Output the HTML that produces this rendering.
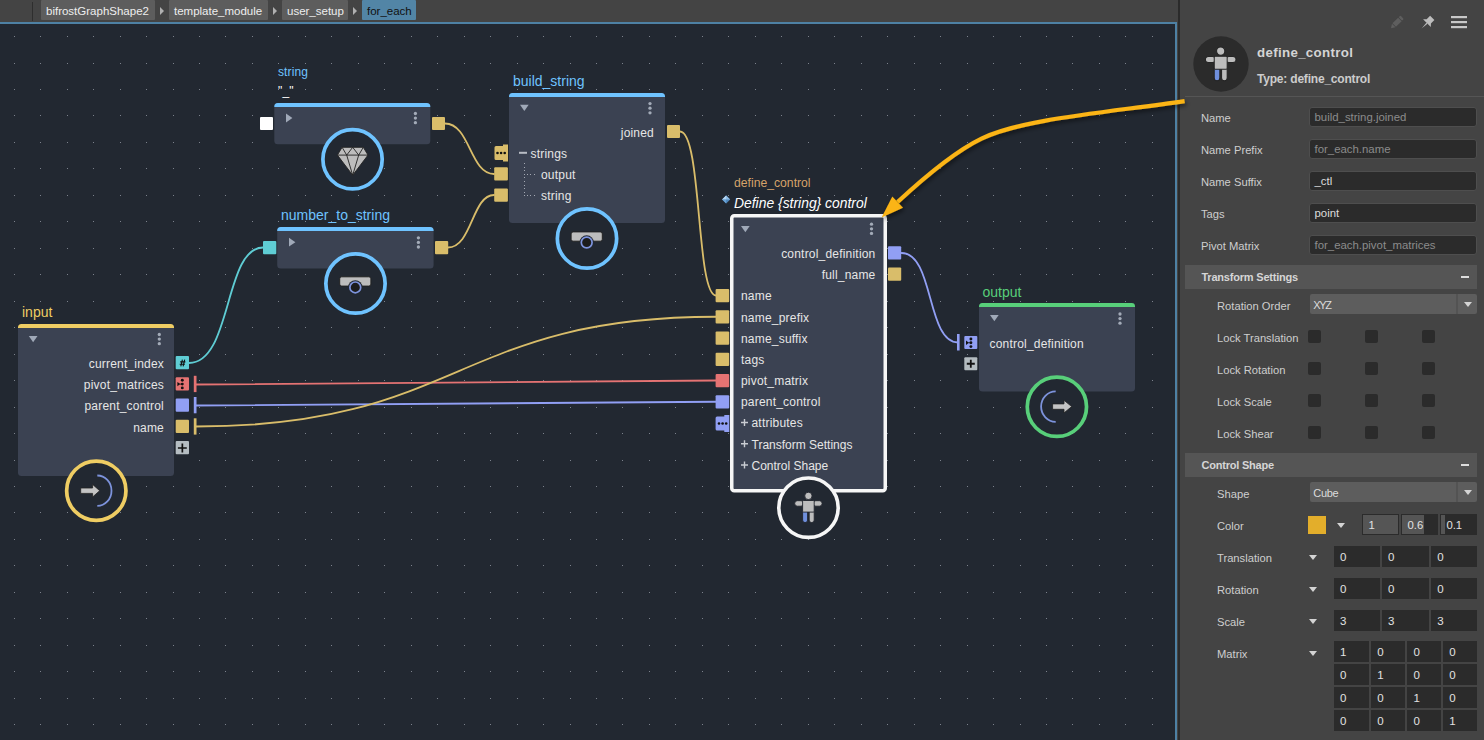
<!DOCTYPE html>
<html><head><meta charset="utf-8"><title>Bifrost Graph</title><style>
*{box-sizing:border-box;margin:0;padding:0}
html,body{width:1484px;height:740px;overflow:hidden;background:#444;font-family:"Liberation Sans",sans-serif;}
#top{position:absolute;left:0;top:0;width:1178px;height:22px;background:#444}
.chip{position:absolute;top:0;height:20px;background:#5d5d5d;color:#eee;font-size:11.5px;line-height:22px;padding-left:5px;white-space:nowrap;border-radius:1px;overflow:hidden}
.chip.act{background:#5285a6;color:#111}
.sep{position:absolute;top:7px;width:0;height:0;border-left:4.6px solid #b0b0b0;border-top:4px solid transparent;border-bottom:4px solid transparent}
#graph{position:absolute;left:0;top:22px;width:1177px;height:718px;background:#222831;border-top:2px solid #4e81a4;border-right:2px solid #4e81a4;overflow:hidden}
#gsvg{position:absolute;left:0;top:-24px}
.t{position:absolute;white-space:nowrap;color:#e6e6e6;font-size:12px;line-height:14px;letter-spacing:0.2px}
.r{text-align:right}
#divider{position:absolute;left:1178px;top:0;width:2px;height:740px;background:#2b2b2b}
#panel{position:absolute;left:1180px;top:0;width:304px;height:740px;background:#444}
.pl{position:absolute;white-space:nowrap;color:#cecece;font-size:11.2px;line-height:14px}
.fld{position:absolute;background:#2b2b2b;border:1px solid #4e4e4e;border-radius:3px;color:#dcdcdc;font-size:11.4px;line-height:18px;padding-left:5px;white-space:nowrap;overflow:hidden}
.fld.dim{color:#8c8c8c}
.hdr{position:absolute;left:5px;width:292.4px;height:24px;background:#555;color:#d6d6d6;font-weight:bold;font-size:11px;letter-spacing:-0.2px;line-height:25.5px;padding-left:16.4px}
.hdr i{position:absolute;right:8px;top:11px;width:8.2px;height:2px;background:#ddd}
.dd{position:absolute;left:130.3px;width:167.1px;height:20px;background:#5d5d5d;border-radius:2px;color:#dcdcdc;font-size:11px;letter-spacing:-0.3px;line-height:22px;padding-left:3px}
.dd:after{content:"";position:absolute;right:19.8px;top:0;width:2px;height:20px;background:#535353}
.dd b{position:absolute;right:5px;top:8px;width:0;height:0;border-top:5.4px solid #d4d4d4;border-left:4.8px solid transparent;border-right:4.8px solid transparent}
.cb{position:absolute;width:13px;height:13px;background:#2b2b2b;border-radius:2px}
.ar{position:absolute;width:0;height:0;border-top:5.4px solid #d4d4d4;border-left:4.8px solid transparent;border-right:4.8px solid transparent}
.nf{position:absolute;background:#2b2b2b;color:#e2e2e2;font-size:11.5px;line-height:23px;padding-left:6px;height:21px;overflow:hidden}
</style></head><body>
<div id="top"><div style="position:absolute;left:32px;top:2px;width:1px;height:19px;background:#2e2e2e"></div><div class="chip " style="left:41px;width:114px">bifrostGraphShape2</div><div class="chip " style="left:169px;width:99px">template_module</div><div class="chip " style="left:282px;width:66px">user_setup</div><div class="chip act" style="left:362px;width:54px">for_each</div><div class="sep" style="left:159.6px"></div><div class="sep" style="left:272.6px"></div><div class="sep" style="left:352.6px"></div></div>
<div id="graph">
<svg id="gsvg" width="1484" height="740" viewBox="0 0 1484 740"><defs><pattern id="dots" x="14" y="36" width="26.5" height="26.5" patternUnits="userSpaceOnUse"><rect x="0" y="0" width="1" height="1" fill="#737983"/></pattern><filter id="sh" x="-10%" y="-10%" width="130%" height="140%"><feDropShadow dx="1.5" dy="2.5" stdDeviation="2" flood-color="#000" flood-opacity="0.5"/></filter></defs><path d="M14 36.5h1M40 36.5h1M67 36.5h1M93 36.5h1M120 36.5h1M146 36.5h1M173 36.5h1M199 36.5h1M225 36.5h1M252 36.5h1M278 36.5h1M305 36.5h1M331 36.5h1M358 36.5h1M384 36.5h1M411 36.5h1M437 36.5h1M464 36.5h1M490 36.5h1M517 36.5h1M543 36.5h1M570 36.5h1M596 36.5h1M622 36.5h1M649 36.5h1M675 36.5h1M702 36.5h1M728 36.5h1M755 36.5h1M781 36.5h1M808 36.5h1M834 36.5h1M861 36.5h1M887 36.5h1M914 36.5h1M940 36.5h1M967 36.5h1M993 36.5h1M1020 36.5h1M1046 36.5h1M1072 36.5h1M1099 36.5h1M1125 36.5h1M1152 36.5h1M14 63.5h1M40 63.5h1M67 63.5h1M93 63.5h1M120 63.5h1M146 63.5h1M173 63.5h1M199 63.5h1M225 63.5h1M252 63.5h1M278 63.5h1M305 63.5h1M331 63.5h1M358 63.5h1M384 63.5h1M411 63.5h1M437 63.5h1M464 63.5h1M490 63.5h1M517 63.5h1M543 63.5h1M570 63.5h1M596 63.5h1M622 63.5h1M649 63.5h1M675 63.5h1M702 63.5h1M728 63.5h1M755 63.5h1M781 63.5h1M808 63.5h1M834 63.5h1M861 63.5h1M887 63.5h1M914 63.5h1M940 63.5h1M967 63.5h1M993 63.5h1M1020 63.5h1M1046 63.5h1M1072 63.5h1M1099 63.5h1M1125 63.5h1M1152 63.5h1M14 89.5h1M40 89.5h1M67 89.5h1M93 89.5h1M120 89.5h1M146 89.5h1M173 89.5h1M199 89.5h1M225 89.5h1M252 89.5h1M278 89.5h1M305 89.5h1M331 89.5h1M358 89.5h1M384 89.5h1M411 89.5h1M437 89.5h1M464 89.5h1M490 89.5h1M517 89.5h1M543 89.5h1M570 89.5h1M596 89.5h1M622 89.5h1M649 89.5h1M675 89.5h1M702 89.5h1M728 89.5h1M755 89.5h1M781 89.5h1M808 89.5h1M834 89.5h1M861 89.5h1M887 89.5h1M914 89.5h1M940 89.5h1M967 89.5h1M993 89.5h1M1020 89.5h1M1046 89.5h1M1072 89.5h1M1099 89.5h1M1125 89.5h1M1152 89.5h1M14 115.5h1M40 115.5h1M67 115.5h1M93 115.5h1M120 115.5h1M146 115.5h1M173 115.5h1M199 115.5h1M225 115.5h1M252 115.5h1M278 115.5h1M305 115.5h1M331 115.5h1M358 115.5h1M384 115.5h1M411 115.5h1M437 115.5h1M464 115.5h1M490 115.5h1M517 115.5h1M543 115.5h1M570 115.5h1M596 115.5h1M622 115.5h1M649 115.5h1M675 115.5h1M702 115.5h1M728 115.5h1M755 115.5h1M781 115.5h1M808 115.5h1M834 115.5h1M861 115.5h1M887 115.5h1M914 115.5h1M940 115.5h1M967 115.5h1M993 115.5h1M1020 115.5h1M1046 115.5h1M1072 115.5h1M1099 115.5h1M1125 115.5h1M1152 115.5h1M14 142.5h1M40 142.5h1M67 142.5h1M93 142.5h1M120 142.5h1M146 142.5h1M173 142.5h1M199 142.5h1M225 142.5h1M252 142.5h1M278 142.5h1M305 142.5h1M331 142.5h1M358 142.5h1M384 142.5h1M411 142.5h1M437 142.5h1M464 142.5h1M490 142.5h1M517 142.5h1M543 142.5h1M570 142.5h1M596 142.5h1M622 142.5h1M649 142.5h1M675 142.5h1M702 142.5h1M728 142.5h1M755 142.5h1M781 142.5h1M808 142.5h1M834 142.5h1M861 142.5h1M887 142.5h1M914 142.5h1M940 142.5h1M967 142.5h1M993 142.5h1M1020 142.5h1M1046 142.5h1M1072 142.5h1M1099 142.5h1M1125 142.5h1M1152 142.5h1M14 168.5h1M40 168.5h1M67 168.5h1M93 168.5h1M120 168.5h1M146 168.5h1M173 168.5h1M199 168.5h1M225 168.5h1M252 168.5h1M278 168.5h1M305 168.5h1M331 168.5h1M358 168.5h1M384 168.5h1M411 168.5h1M437 168.5h1M464 168.5h1M490 168.5h1M517 168.5h1M543 168.5h1M570 168.5h1M596 168.5h1M622 168.5h1M649 168.5h1M675 168.5h1M702 168.5h1M728 168.5h1M755 168.5h1M781 168.5h1M808 168.5h1M834 168.5h1M861 168.5h1M887 168.5h1M914 168.5h1M940 168.5h1M967 168.5h1M993 168.5h1M1020 168.5h1M1046 168.5h1M1072 168.5h1M1099 168.5h1M1125 168.5h1M1152 168.5h1M14 195.5h1M40 195.5h1M67 195.5h1M93 195.5h1M120 195.5h1M146 195.5h1M173 195.5h1M199 195.5h1M225 195.5h1M252 195.5h1M278 195.5h1M305 195.5h1M331 195.5h1M358 195.5h1M384 195.5h1M411 195.5h1M437 195.5h1M464 195.5h1M490 195.5h1M517 195.5h1M543 195.5h1M570 195.5h1M596 195.5h1M622 195.5h1M649 195.5h1M675 195.5h1M702 195.5h1M728 195.5h1M755 195.5h1M781 195.5h1M808 195.5h1M834 195.5h1M861 195.5h1M887 195.5h1M914 195.5h1M940 195.5h1M967 195.5h1M993 195.5h1M1020 195.5h1M1046 195.5h1M1072 195.5h1M1099 195.5h1M1125 195.5h1M1152 195.5h1M14 221.5h1M40 221.5h1M67 221.5h1M93 221.5h1M120 221.5h1M146 221.5h1M173 221.5h1M199 221.5h1M225 221.5h1M252 221.5h1M278 221.5h1M305 221.5h1M331 221.5h1M358 221.5h1M384 221.5h1M411 221.5h1M437 221.5h1M464 221.5h1M490 221.5h1M517 221.5h1M543 221.5h1M570 221.5h1M596 221.5h1M622 221.5h1M649 221.5h1M675 221.5h1M702 221.5h1M728 221.5h1M755 221.5h1M781 221.5h1M808 221.5h1M834 221.5h1M861 221.5h1M887 221.5h1M914 221.5h1M940 221.5h1M967 221.5h1M993 221.5h1M1020 221.5h1M1046 221.5h1M1072 221.5h1M1099 221.5h1M1125 221.5h1M1152 221.5h1M14 248.5h1M40 248.5h1M67 248.5h1M93 248.5h1M120 248.5h1M146 248.5h1M173 248.5h1M199 248.5h1M225 248.5h1M252 248.5h1M278 248.5h1M305 248.5h1M331 248.5h1M358 248.5h1M384 248.5h1M411 248.5h1M437 248.5h1M464 248.5h1M490 248.5h1M517 248.5h1M543 248.5h1M570 248.5h1M596 248.5h1M622 248.5h1M649 248.5h1M675 248.5h1M702 248.5h1M728 248.5h1M755 248.5h1M781 248.5h1M808 248.5h1M834 248.5h1M861 248.5h1M887 248.5h1M914 248.5h1M940 248.5h1M967 248.5h1M993 248.5h1M1020 248.5h1M1046 248.5h1M1072 248.5h1M1099 248.5h1M1125 248.5h1M1152 248.5h1M14 274.5h1M40 274.5h1M67 274.5h1M93 274.5h1M120 274.5h1M146 274.5h1M173 274.5h1M199 274.5h1M225 274.5h1M252 274.5h1M278 274.5h1M305 274.5h1M331 274.5h1M358 274.5h1M384 274.5h1M411 274.5h1M437 274.5h1M464 274.5h1M490 274.5h1M517 274.5h1M543 274.5h1M570 274.5h1M596 274.5h1M622 274.5h1M649 274.5h1M675 274.5h1M702 274.5h1M728 274.5h1M755 274.5h1M781 274.5h1M808 274.5h1M834 274.5h1M861 274.5h1M887 274.5h1M914 274.5h1M940 274.5h1M967 274.5h1M993 274.5h1M1020 274.5h1M1046 274.5h1M1072 274.5h1M1099 274.5h1M1125 274.5h1M1152 274.5h1M14 301.5h1M40 301.5h1M67 301.5h1M93 301.5h1M120 301.5h1M146 301.5h1M173 301.5h1M199 301.5h1M225 301.5h1M252 301.5h1M278 301.5h1M305 301.5h1M331 301.5h1M358 301.5h1M384 301.5h1M411 301.5h1M437 301.5h1M464 301.5h1M490 301.5h1M517 301.5h1M543 301.5h1M570 301.5h1M596 301.5h1M622 301.5h1M649 301.5h1M675 301.5h1M702 301.5h1M728 301.5h1M755 301.5h1M781 301.5h1M808 301.5h1M834 301.5h1M861 301.5h1M887 301.5h1M914 301.5h1M940 301.5h1M967 301.5h1M993 301.5h1M1020 301.5h1M1046 301.5h1M1072 301.5h1M1099 301.5h1M1125 301.5h1M1152 301.5h1M14 327.5h1M40 327.5h1M67 327.5h1M93 327.5h1M120 327.5h1M146 327.5h1M173 327.5h1M199 327.5h1M225 327.5h1M252 327.5h1M278 327.5h1M305 327.5h1M331 327.5h1M358 327.5h1M384 327.5h1M411 327.5h1M437 327.5h1M464 327.5h1M490 327.5h1M517 327.5h1M543 327.5h1M570 327.5h1M596 327.5h1M622 327.5h1M649 327.5h1M675 327.5h1M702 327.5h1M728 327.5h1M755 327.5h1M781 327.5h1M808 327.5h1M834 327.5h1M861 327.5h1M887 327.5h1M914 327.5h1M940 327.5h1M967 327.5h1M993 327.5h1M1020 327.5h1M1046 327.5h1M1072 327.5h1M1099 327.5h1M1125 327.5h1M1152 327.5h1M14 354.5h1M40 354.5h1M67 354.5h1M93 354.5h1M120 354.5h1M146 354.5h1M173 354.5h1M199 354.5h1M225 354.5h1M252 354.5h1M278 354.5h1M305 354.5h1M331 354.5h1M358 354.5h1M384 354.5h1M411 354.5h1M437 354.5h1M464 354.5h1M490 354.5h1M517 354.5h1M543 354.5h1M570 354.5h1M596 354.5h1M622 354.5h1M649 354.5h1M675 354.5h1M702 354.5h1M728 354.5h1M755 354.5h1M781 354.5h1M808 354.5h1M834 354.5h1M861 354.5h1M887 354.5h1M914 354.5h1M940 354.5h1M967 354.5h1M993 354.5h1M1020 354.5h1M1046 354.5h1M1072 354.5h1M1099 354.5h1M1125 354.5h1M1152 354.5h1M14 380.5h1M40 380.5h1M67 380.5h1M93 380.5h1M120 380.5h1M146 380.5h1M173 380.5h1M199 380.5h1M225 380.5h1M252 380.5h1M278 380.5h1M305 380.5h1M331 380.5h1M358 380.5h1M384 380.5h1M411 380.5h1M437 380.5h1M464 380.5h1M490 380.5h1M517 380.5h1M543 380.5h1M570 380.5h1M596 380.5h1M622 380.5h1M649 380.5h1M675 380.5h1M702 380.5h1M728 380.5h1M755 380.5h1M781 380.5h1M808 380.5h1M834 380.5h1M861 380.5h1M887 380.5h1M914 380.5h1M940 380.5h1M967 380.5h1M993 380.5h1M1020 380.5h1M1046 380.5h1M1072 380.5h1M1099 380.5h1M1125 380.5h1M1152 380.5h1M14 407.5h1M40 407.5h1M67 407.5h1M93 407.5h1M120 407.5h1M146 407.5h1M173 407.5h1M199 407.5h1M225 407.5h1M252 407.5h1M278 407.5h1M305 407.5h1M331 407.5h1M358 407.5h1M384 407.5h1M411 407.5h1M437 407.5h1M464 407.5h1M490 407.5h1M517 407.5h1M543 407.5h1M570 407.5h1M596 407.5h1M622 407.5h1M649 407.5h1M675 407.5h1M702 407.5h1M728 407.5h1M755 407.5h1M781 407.5h1M808 407.5h1M834 407.5h1M861 407.5h1M887 407.5h1M914 407.5h1M940 407.5h1M967 407.5h1M993 407.5h1M1020 407.5h1M1046 407.5h1M1072 407.5h1M1099 407.5h1M1125 407.5h1M1152 407.5h1M14 433.5h1M40 433.5h1M67 433.5h1M93 433.5h1M120 433.5h1M146 433.5h1M173 433.5h1M199 433.5h1M225 433.5h1M252 433.5h1M278 433.5h1M305 433.5h1M331 433.5h1M358 433.5h1M384 433.5h1M411 433.5h1M437 433.5h1M464 433.5h1M490 433.5h1M517 433.5h1M543 433.5h1M570 433.5h1M596 433.5h1M622 433.5h1M649 433.5h1M675 433.5h1M702 433.5h1M728 433.5h1M755 433.5h1M781 433.5h1M808 433.5h1M834 433.5h1M861 433.5h1M887 433.5h1M914 433.5h1M940 433.5h1M967 433.5h1M993 433.5h1M1020 433.5h1M1046 433.5h1M1072 433.5h1M1099 433.5h1M1125 433.5h1M1152 433.5h1M14 460.5h1M40 460.5h1M67 460.5h1M93 460.5h1M120 460.5h1M146 460.5h1M173 460.5h1M199 460.5h1M225 460.5h1M252 460.5h1M278 460.5h1M305 460.5h1M331 460.5h1M358 460.5h1M384 460.5h1M411 460.5h1M437 460.5h1M464 460.5h1M490 460.5h1M517 460.5h1M543 460.5h1M570 460.5h1M596 460.5h1M622 460.5h1M649 460.5h1M675 460.5h1M702 460.5h1M728 460.5h1M755 460.5h1M781 460.5h1M808 460.5h1M834 460.5h1M861 460.5h1M887 460.5h1M914 460.5h1M940 460.5h1M967 460.5h1M993 460.5h1M1020 460.5h1M1046 460.5h1M1072 460.5h1M1099 460.5h1M1125 460.5h1M1152 460.5h1M14 486.5h1M40 486.5h1M67 486.5h1M93 486.5h1M120 486.5h1M146 486.5h1M173 486.5h1M199 486.5h1M225 486.5h1M252 486.5h1M278 486.5h1M305 486.5h1M331 486.5h1M358 486.5h1M384 486.5h1M411 486.5h1M437 486.5h1M464 486.5h1M490 486.5h1M517 486.5h1M543 486.5h1M570 486.5h1M596 486.5h1M622 486.5h1M649 486.5h1M675 486.5h1M702 486.5h1M728 486.5h1M755 486.5h1M781 486.5h1M808 486.5h1M834 486.5h1M861 486.5h1M887 486.5h1M914 486.5h1M940 486.5h1M967 486.5h1M993 486.5h1M1020 486.5h1M1046 486.5h1M1072 486.5h1M1099 486.5h1M1125 486.5h1M1152 486.5h1M14 512.5h1M40 512.5h1M67 512.5h1M93 512.5h1M120 512.5h1M146 512.5h1M173 512.5h1M199 512.5h1M225 512.5h1M252 512.5h1M278 512.5h1M305 512.5h1M331 512.5h1M358 512.5h1M384 512.5h1M411 512.5h1M437 512.5h1M464 512.5h1M490 512.5h1M517 512.5h1M543 512.5h1M570 512.5h1M596 512.5h1M622 512.5h1M649 512.5h1M675 512.5h1M702 512.5h1M728 512.5h1M755 512.5h1M781 512.5h1M808 512.5h1M834 512.5h1M861 512.5h1M887 512.5h1M914 512.5h1M940 512.5h1M967 512.5h1M993 512.5h1M1020 512.5h1M1046 512.5h1M1072 512.5h1M1099 512.5h1M1125 512.5h1M1152 512.5h1M14 539.5h1M40 539.5h1M67 539.5h1M93 539.5h1M120 539.5h1M146 539.5h1M173 539.5h1M199 539.5h1M225 539.5h1M252 539.5h1M278 539.5h1M305 539.5h1M331 539.5h1M358 539.5h1M384 539.5h1M411 539.5h1M437 539.5h1M464 539.5h1M490 539.5h1M517 539.5h1M543 539.5h1M570 539.5h1M596 539.5h1M622 539.5h1M649 539.5h1M675 539.5h1M702 539.5h1M728 539.5h1M755 539.5h1M781 539.5h1M808 539.5h1M834 539.5h1M861 539.5h1M887 539.5h1M914 539.5h1M940 539.5h1M967 539.5h1M993 539.5h1M1020 539.5h1M1046 539.5h1M1072 539.5h1M1099 539.5h1M1125 539.5h1M1152 539.5h1M14 565.5h1M40 565.5h1M67 565.5h1M93 565.5h1M120 565.5h1M146 565.5h1M173 565.5h1M199 565.5h1M225 565.5h1M252 565.5h1M278 565.5h1M305 565.5h1M331 565.5h1M358 565.5h1M384 565.5h1M411 565.5h1M437 565.5h1M464 565.5h1M490 565.5h1M517 565.5h1M543 565.5h1M570 565.5h1M596 565.5h1M622 565.5h1M649 565.5h1M675 565.5h1M702 565.5h1M728 565.5h1M755 565.5h1M781 565.5h1M808 565.5h1M834 565.5h1M861 565.5h1M887 565.5h1M914 565.5h1M940 565.5h1M967 565.5h1M993 565.5h1M1020 565.5h1M1046 565.5h1M1072 565.5h1M1099 565.5h1M1125 565.5h1M1152 565.5h1M14 592.5h1M40 592.5h1M67 592.5h1M93 592.5h1M120 592.5h1M146 592.5h1M173 592.5h1M199 592.5h1M225 592.5h1M252 592.5h1M278 592.5h1M305 592.5h1M331 592.5h1M358 592.5h1M384 592.5h1M411 592.5h1M437 592.5h1M464 592.5h1M490 592.5h1M517 592.5h1M543 592.5h1M570 592.5h1M596 592.5h1M622 592.5h1M649 592.5h1M675 592.5h1M702 592.5h1M728 592.5h1M755 592.5h1M781 592.5h1M808 592.5h1M834 592.5h1M861 592.5h1M887 592.5h1M914 592.5h1M940 592.5h1M967 592.5h1M993 592.5h1M1020 592.5h1M1046 592.5h1M1072 592.5h1M1099 592.5h1M1125 592.5h1M1152 592.5h1M14 618.5h1M40 618.5h1M67 618.5h1M93 618.5h1M120 618.5h1M146 618.5h1M173 618.5h1M199 618.5h1M225 618.5h1M252 618.5h1M278 618.5h1M305 618.5h1M331 618.5h1M358 618.5h1M384 618.5h1M411 618.5h1M437 618.5h1M464 618.5h1M490 618.5h1M517 618.5h1M543 618.5h1M570 618.5h1M596 618.5h1M622 618.5h1M649 618.5h1M675 618.5h1M702 618.5h1M728 618.5h1M755 618.5h1M781 618.5h1M808 618.5h1M834 618.5h1M861 618.5h1M887 618.5h1M914 618.5h1M940 618.5h1M967 618.5h1M993 618.5h1M1020 618.5h1M1046 618.5h1M1072 618.5h1M1099 618.5h1M1125 618.5h1M1152 618.5h1M14 645.5h1M40 645.5h1M67 645.5h1M93 645.5h1M120 645.5h1M146 645.5h1M173 645.5h1M199 645.5h1M225 645.5h1M252 645.5h1M278 645.5h1M305 645.5h1M331 645.5h1M358 645.5h1M384 645.5h1M411 645.5h1M437 645.5h1M464 645.5h1M490 645.5h1M517 645.5h1M543 645.5h1M570 645.5h1M596 645.5h1M622 645.5h1M649 645.5h1M675 645.5h1M702 645.5h1M728 645.5h1M755 645.5h1M781 645.5h1M808 645.5h1M834 645.5h1M861 645.5h1M887 645.5h1M914 645.5h1M940 645.5h1M967 645.5h1M993 645.5h1M1020 645.5h1M1046 645.5h1M1072 645.5h1M1099 645.5h1M1125 645.5h1M1152 645.5h1M14 671.5h1M40 671.5h1M67 671.5h1M93 671.5h1M120 671.5h1M146 671.5h1M173 671.5h1M199 671.5h1M225 671.5h1M252 671.5h1M278 671.5h1M305 671.5h1M331 671.5h1M358 671.5h1M384 671.5h1M411 671.5h1M437 671.5h1M464 671.5h1M490 671.5h1M517 671.5h1M543 671.5h1M570 671.5h1M596 671.5h1M622 671.5h1M649 671.5h1M675 671.5h1M702 671.5h1M728 671.5h1M755 671.5h1M781 671.5h1M808 671.5h1M834 671.5h1M861 671.5h1M887 671.5h1M914 671.5h1M940 671.5h1M967 671.5h1M993 671.5h1M1020 671.5h1M1046 671.5h1M1072 671.5h1M1099 671.5h1M1125 671.5h1M1152 671.5h1M14 698.5h1M40 698.5h1M67 698.5h1M93 698.5h1M120 698.5h1M146 698.5h1M173 698.5h1M199 698.5h1M225 698.5h1M252 698.5h1M278 698.5h1M305 698.5h1M331 698.5h1M358 698.5h1M384 698.5h1M411 698.5h1M437 698.5h1M464 698.5h1M490 698.5h1M517 698.5h1M543 698.5h1M570 698.5h1M596 698.5h1M622 698.5h1M649 698.5h1M675 698.5h1M702 698.5h1M728 698.5h1M755 698.5h1M781 698.5h1M808 698.5h1M834 698.5h1M861 698.5h1M887 698.5h1M914 698.5h1M940 698.5h1M967 698.5h1M993 698.5h1M1020 698.5h1M1046 698.5h1M1072 698.5h1M1099 698.5h1M1125 698.5h1M1152 698.5h1M14 724.5h1M40 724.5h1M67 724.5h1M93 724.5h1M120 724.5h1M146 724.5h1M173 724.5h1M199 724.5h1M225 724.5h1M252 724.5h1M278 724.5h1M305 724.5h1M331 724.5h1M358 724.5h1M384 724.5h1M411 724.5h1M437 724.5h1M464 724.5h1M490 724.5h1M517 724.5h1M543 724.5h1M570 724.5h1M596 724.5h1M622 724.5h1M649 724.5h1M675 724.5h1M702 724.5h1M728 724.5h1M755 724.5h1M781 724.5h1M808 724.5h1M834 724.5h1M861 724.5h1M887 724.5h1M914 724.5h1M940 724.5h1M967 724.5h1M993 724.5h1M1020 724.5h1M1046 724.5h1M1072 724.5h1M1099 724.5h1M1125 724.5h1M1152 724.5h1" stroke="#7c828c" stroke-width="1" fill="none" shape-rendering="crispEdges"/><path d="M445 123.5 C470 123.5 470 174 494 174" fill="none" stroke="#d9bd6a" stroke-width="1.8" stroke-linecap="round"/><path d="M448 247.5 C472 247.5 472 195 494 195" fill="none" stroke="#d9bd6a" stroke-width="1.8" stroke-linecap="round"/><path d="M680 131.5 C702 131.5 696 295.5 716 295.5" fill="none" stroke="#d9bd6a" stroke-width="1.8" stroke-linecap="round"/><path d="M189 363 C232 363 224 247.5 263 247.5" fill="none" stroke="#5fcdd4" stroke-width="1.8" stroke-linecap="round"/><path d="M196 384.5 L716 380.5" fill="none" stroke="#e57373" stroke-width="1.8" stroke-linecap="round"/><path d="M196 405.5 L716 401.75" fill="none" stroke="#919ff4" stroke-width="1.8" stroke-linecap="round"/><path d="M196 426.5 C460 426.5 456 316.75 716 316.75" fill="none" stroke="#d9bd6a" stroke-width="1.8" stroke-linecap="round"/><path d="M901.5 253 C934 253 926.5 342.5 958 342.5" fill="none" stroke="#919ff4" stroke-width="1.8" stroke-linecap="round"/><rect x="274.3" y="103" width="156" height="41.3" rx="3.5" fill="#3b4252"/><path d="M274.3 107 v-0.5 a3.5 3.5 0 0 1 3.5 -3.5 h149 a3.5 3.5 0 0 1 3.5 3.5 v0.5z" fill="#6fc3ff"/><rect x="260" y="117" width="13" height="13" rx="1" fill="#fff"/><rect x="432" y="117" width="13" height="13" rx="1" fill="#d9bd6a"/><path d="M286 113.6 v8.8 l6.4 -4.4z" fill="#a0a9b8"/><circle cx="415.4" cy="113.5" r="1.65" fill="#a3abb8"/><circle cx="415.4" cy="118.1" r="1.65" fill="#a3abb8"/><circle cx="415.4" cy="122.7" r="1.65" fill="#a3abb8"/><circle cx="352.55" cy="159.3" r="29.65" fill="#222831" stroke="#6fc3ff" stroke-width="3.7"/><g transform="translate(352.7,161)" stroke="#222" stroke-width="0.9" stroke-linejoin="round" fill="#bdbdbd"><path d="M-15.3 -5.9 L-10.6 -13.7 H10.6 L15.3 -5.9 L0 14.2z"/><path d="M-15.3 -5.9 H15.3 M-6 -5.9 L0 14.2 L6 -5.9 M-10.6 -13.7 L-6 -5.9 L0 -13.7 L6 -5.9 L10.6 -13.7" fill="none"/></g><rect x="277.2" y="227" width="156.4" height="41.6" rx="3.5" fill="#3b4252"/><path d="M277.2 231 v-0.5 a3.5 3.5 0 0 1 3.5 -3.5 h149.4 a3.5 3.5 0 0 1 3.5 3.5 v0.5z" fill="#6fc3ff"/><rect x="263" y="241" width="13.3" height="13.3" rx="1" fill="#5fcdd4"/><rect x="435" y="241" width="13.2" height="13.3" rx="1" fill="#d9bd6a"/><path d="M289 237.8 v8.8 l6.4 -4.4z" fill="#a0a9b8"/><circle cx="418.4" cy="237.8" r="1.65" fill="#a3abb8"/><circle cx="418.4" cy="242.4" r="1.65" fill="#a3abb8"/><circle cx="418.4" cy="247.0" r="1.65" fill="#a3abb8"/><circle cx="355.5" cy="283.55" r="29.65" fill="#222831" stroke="#6fc3ff" stroke-width="3.7"/><g transform="translate(355.3,286.3)"><rect x="-15.6" y="-9.5" width="31.2" height="9.3" rx="2" fill="#bdbdbd" stroke="#222" stroke-width="1"/><circle cx="0" cy="1.1" r="7.2" fill="#222831"/><circle cx="0" cy="1.1" r="5.4" fill="#1c1c1c" stroke="#7d93dc" stroke-width="1.7"/></g><rect x="509" y="93" width="156" height="130" rx="3.5" fill="#3b4252"/><path d="M509 97 v-0.5 a3.5 3.5 0 0 1 3.5 -3.5 h149 a3.5 3.5 0 0 1 3.5 3.5 v0.5z" fill="#6fc3ff"/><rect x="667" y="125" width="13" height="13" rx="1" fill="#d9bd6a"/><path d="M520 104.8 h8.7 l-4.35 6.2z" fill="#a0a9b8"/><circle cx="650" cy="103.6" r="1.65" fill="#a3abb8"/><circle cx="650" cy="108.19999999999999" r="1.65" fill="#a3abb8"/><circle cx="650" cy="112.8" r="1.65" fill="#a3abb8"/><path d="M494.5 147.5 a1.5 1.5 0 0 1 1.5 -1.5 h7 v-1.5 h5 v17 h-5 v-1.5 h-7 a1.5 1.5 0 0 1 -1.5 -1.5z" fill="#d9bd6a"/><circle cx="497.5" cy="153" r="1.3" fill="#111"/><circle cx="501.1" cy="153" r="1.3" fill="#111"/><circle cx="504.7" cy="153" r="1.3" fill="#111"/><rect x="494.2" y="167.3" width="13.7" height="13.3" rx="1" fill="#d9bd6a"/><rect x="494.2" y="188.5" width="13.7" height="13.3" rx="1" fill="#d9bd6a"/><rect x="519" y="151.8" width="8" height="2" fill="#b8bcc4"/><path d="M524 163.5h1M524 167.5h1M524 170.5h1M524 174.5h1M524 177.5h1M524 181.5h1M524 185.5h1M524 188.5h1M524 192.5h1M524 195.5h1M527 174.5h1M530 174.5h1M534 174.5h1M527 195.5h1M530 195.5h1M534 195.5h1" stroke="#a4a9b3" stroke-width="1" fill="none" shape-rendering="crispEdges"/><circle cx="587" cy="238.5" r="29.65" fill="#222831" stroke="#6fc3ff" stroke-width="3.7"/><g transform="translate(586.7,241.4)"><rect x="-15.6" y="-9.5" width="31.2" height="9.3" rx="2" fill="#bdbdbd" stroke="#222" stroke-width="1"/><circle cx="0" cy="1.1" r="7.2" fill="#222831"/><circle cx="0" cy="1.1" r="5.4" fill="#1c1c1c" stroke="#7d93dc" stroke-width="1.7"/></g><rect x="18" y="324" width="156" height="152" rx="3.5" fill="#3b4252"/><path d="M18 328 v-0.5 a3.5 3.5 0 0 1 3.5 -3.5 h149 a3.5 3.5 0 0 1 3.5 3.5 v0.5z" fill="#efcd63"/><path d="M28.8 336 h8.7 l-4.35 6.2z" fill="#a0a9b8"/><circle cx="159.3" cy="334.5" r="1.65" fill="#a3abb8"/><circle cx="159.3" cy="339.1" r="1.65" fill="#a3abb8"/><circle cx="159.3" cy="343.7" r="1.65" fill="#a3abb8"/><rect x="175.7" y="356" width="13.3" height="13.3" rx="1" fill="#5fcdd4"/><rect x="175.7" y="377.3" width="13.3" height="13.3" rx="1" fill="#e57373"/><rect x="175.7" y="398.5" width="13.3" height="13.3" rx="1" fill="#919ff4"/><rect x="175.7" y="419.8" width="13.3" height="13.3" rx="1" fill="#d9bd6a"/><rect x="175.7" y="441" width="13.3" height="13.3" rx="1" fill="#b5bdc2"/><path d="M182.4 359.7 l-1.6 6.7 M184.7 359.7 l-1.6 6.7 M180.2 361.9 h5.2 M179.7 364.3 h5.2" stroke="#111" stroke-width="1.1" fill="none"/><g fill="#111"><circle cx="182.29999999999998" cy="380.3" r="1.45"/><circle cx="182.29999999999998" cy="384.1" r="1.45"/><circle cx="182.29999999999998" cy="387.90000000000003" r="1.45"/><path d="M177.39999999999998 381.90000000000003 l2.9 2.2 l-2.9 2.2z"/><rect x="179.7" y="383.7" width="1.6" height="0.8"/></g><path d="M177.9 448 h8.9 M182.35 443.6 v8.8" stroke="#111" stroke-width="1.7"/><rect x="193.8" y="375.8" width="2.7" height="16.3" fill="#e57373"/><rect x="193.8" y="397" width="2.7" height="16.3" fill="#919ff4"/><rect x="193.8" y="418.3" width="2.7" height="16.3" fill="#d9bd6a"/><circle cx="96.3" cy="490.7" r="29.65" fill="#222831" stroke="#efcd63" stroke-width="3.7"/><g transform="translate(96.3,490.7)"><path d="M1 -15.2 A14.2 15.2 0 0 1 1 15.2" fill="none" stroke="#7d93dc" stroke-width="1.8"/><path d="M-15.6 -2.7 h11.9 v-3.6 l7.1 6.3 l-7.1 6.3 v-3.6 h-11.9z" fill="#c4c4c4" stroke="#222" stroke-width="0.8"/></g><rect x="731.75" y="215.75" width="153.5" height="275" rx="2.5" fill="#3b4252" stroke="#f6f6f6" stroke-width="3.5"/><path d="M741 226 h8.7 l-4.35 6.2z" fill="#a0a9b8"/><circle cx="871.5" cy="224.2" r="1.65" fill="#a3abb8"/><circle cx="871.5" cy="228.79999999999998" r="1.65" fill="#a3abb8"/><circle cx="871.5" cy="233.39999999999998" r="1.65" fill="#a3abb8"/><rect x="888" y="246.3" width="13.2" height="13.3" rx="1" fill="#919ff4"/><rect x="888" y="267.4" width="13.2" height="13.3" rx="1" fill="#d9bd6a"/><rect x="715.6" y="289" width="13.6" height="13.3" rx="1" fill="#d9bd6a"/><rect x="715.6" y="310.25" width="13.6" height="13.3" rx="1" fill="#d9bd6a"/><rect x="715.6" y="331.5" width="13.6" height="13.3" rx="1" fill="#d9bd6a"/><rect x="715.6" y="352.75" width="13.6" height="13.3" rx="1" fill="#d9bd6a"/><rect x="715.6" y="374" width="13.6" height="13.3" rx="1" fill="#e57373"/><rect x="715.6" y="395.25" width="13.6" height="13.3" rx="1" fill="#919ff4"/><path d="M715.6 418 a1.5 1.5 0 0 1 1.5 -1.5 h7.2 v-1.5 h5 v17 h-5 v-1.5 h-7.2 a1.5 1.5 0 0 1 -1.5 -1.5z" fill="#919ff4"/><circle cx="719.0" cy="423.5" r="1.3" fill="#111"/><circle cx="722.6" cy="423.5" r="1.3" fill="#111"/><circle cx="726.2" cy="423.5" r="1.3" fill="#111"/><path d="M741 422.5 h7 M744.5 419.0 v7" stroke="#c9ccd2" stroke-width="1.4"/><path d="M741 443.75 h7 M744.5 440.25 v7" stroke="#c9ccd2" stroke-width="1.4"/><path d="M741 465 h7 M744.5 461.5 v7" stroke="#c9ccd2" stroke-width="1.4"/><path d="M726.15 195.6 l4.05 3.95 l-4.05 3.95 l-4.05 -3.95z" fill="#4f87bd"/><path d="M726.15 195.6 l4.05 3.95 h-8.1z" fill="#8fbde6"/><path d="M726.15 195.6 v3.95 h-4.05z" fill="#b7d7f2"/><path d="M726.15 203.5 v-3.95 h-4.05z" fill="#6ba3d6"/><circle cx="808.5" cy="507.7" r="29.7" fill="#222831" stroke="#f6f6f6" stroke-width="3.6"/><g transform="translate(808.4,507.4) scale(1.0)" stroke="#20242c" stroke-width="0.9"><circle cx="0" cy="-11.5" r="3.7" fill="#bdbdbd"/><rect x="-13.7" y="-6.7" width="9" height="5.5" rx="2.7" fill="#bdbdbd"/><rect x="4.7" y="-6.7" width="9" height="5.5" rx="2.7" fill="#bdbdbd"/><path d="M-5.8 4 h5 v8.7 a2.5 2.5 0 0 1 -5 0z" fill="#6f8fdc"/><path d="M0.8 4 h5 v8.7 a2.5 2.5 0 0 1 -5 0z" fill="#bdbdbd"/><rect x="-5.8" y="-6.9" width="11.6" height="11.6" rx="0.8" fill="#bdbdbd"/></g><rect x="979" y="303" width="156" height="88.6" rx="3.5" fill="#3b4252"/><path d="M979 307 v-0.5 a3.5 3.5 0 0 1 3.5 -3.5 h149 a3.5 3.5 0 0 1 3.5 3.5 v0.5z" fill="#58cf7a"/><path d="M990 315 h8.7 l-4.35 6.2z" fill="#a0a9b8"/><circle cx="1120" cy="314.0" r="1.65" fill="#a3abb8"/><circle cx="1120" cy="318.6" r="1.65" fill="#a3abb8"/><circle cx="1120" cy="323.2" r="1.65" fill="#a3abb8"/><rect x="964.3" y="336" width="13" height="13" rx="1" fill="#919ff4"/><g fill="#111"><circle cx="970.9" cy="339" r="1.45"/><circle cx="970.9" cy="342.8" r="1.45"/><circle cx="970.9" cy="346.6" r="1.45"/><path d="M966.0 340.6 l2.9 2.2 l-2.9 2.2z"/><rect x="968.3" y="342.4" width="1.6" height="0.8"/></g><rect x="964.3" y="357.25" width="13" height="13" rx="1" fill="#b4bcc0"/><path d="M966.8 363.75 h8 M970.8 359.75 v8" stroke="#111" stroke-width="1.8"/><rect x="957" y="334" width="2.6" height="16.5" fill="#919ff4"/><circle cx="1056.9" cy="406.8" r="29.65" fill="#222831" stroke="#58cf7a" stroke-width="3.7"/><g transform="translate(1056.9,406.6)"><path d="M-1.2 -15.2 A14.6 15.2 0 0 0 -1.2 15.2" fill="none" stroke="#7d93dc" stroke-width="1.8"/><path d="M-4.3 -2.7 h11.4 v-3.6 l7.7 6.3 l-7.7 6.3 v-3.6 h-11.4z" fill="#c4c4c4" stroke="#222" stroke-width="0.8"/></g></svg>
<div class="t " style="left:278px;top:41px;color:#6fc3ff;font-size:12px;letter-spacing:0.1px">string</div><div class="t " style="left:278px;top:60px;color:#fff;font-size:12px">&quot;_&quot;</div><div class="t " style="left:281px;top:183px;color:#6fc3ff;font-size:14px;line-height:16px;letter-spacing:0;">number_to_string</div><div class="t " style="left:513px;top:49px;color:#6fc3ff;font-size:14px;line-height:16px;letter-spacing:0;">build_string</div><div class="t r" style="right:521px;top:102px;">joined</div><div class="t " style="left:530.5px;top:123px;">strings</div><div class="t " style="left:541px;top:144px;">output</div><div class="t " style="left:541px;top:165px;">string</div><div class="t " style="left:22px;top:280px;color:#efcd63;font-size:14px;line-height:16px;letter-spacing:0;">input</div><div class="t r" style="right:1011px;top:333px;">current_index</div><div class="t r" style="right:1011px;top:354px;">pivot_matrices</div><div class="t r" style="right:1011px;top:375px;">parent_control</div><div class="t r" style="right:1011px;top:397px;">name</div><div class="t " style="left:734px;top:152px;color:#d6a36a;font-size:12.2px;letter-spacing:0">define_control</div><div class="t " style="left:734px;top:171px;color:#fff;font-size:13.9px;font-style:italic;line-height:16px;letter-spacing:0">Define {string} control</div><div class="t r" style="right:299.5px;top:223px;">control_definition</div><div class="t r" style="right:299.5px;top:244px;">full_name</div><div class="t " style="left:741px;top:265px;">name</div><div class="t " style="left:741px;top:287px;">name_prefix</div><div class="t " style="left:741px;top:308px;">name_suffix</div><div class="t " style="left:741px;top:329px;">tags</div><div class="t " style="left:741px;top:350px;">pivot_matrix</div><div class="t " style="left:741px;top:371px;">parent_control</div><div class="t " style="left:751.5px;top:392px;letter-spacing:0.2px">attributes</div><div class="t " style="left:751.5px;top:414px;letter-spacing:0">Transform Settings</div><div class="t " style="left:751.5px;top:435px;letter-spacing:0">Control Shape</div><div class="t " style="left:982.5px;top:260px;color:#58cf7a;font-size:14px;line-height:16px;letter-spacing:0;">output</div><div class="t " style="left:989.5px;top:313px;">control_definition</div>
</div>
<div id="divider"></div>
<div id="panel"><svg width="304" height="100" style="position:absolute;left:0;top:0"><circle cx="41" cy="64" r="27.7" fill="#2b2b2b"/><g transform="translate(40.7,63.9) scale(1.115)" stroke="#242424" stroke-width="0.9"><circle cx="0" cy="-11.5" r="3.7" fill="#bdbdbd"/><rect x="-13.7" y="-6.7" width="9" height="5.5" rx="2.7" fill="#bdbdbd"/><rect x="4.7" y="-6.7" width="9" height="5.5" rx="2.7" fill="#bdbdbd"/><path d="M-5.8 4 h5 v8.7 a2.5 2.5 0 0 1 -5 0z" fill="#6f8fdc"/><path d="M0.8 4 h5 v8.7 a2.5 2.5 0 0 1 -5 0z" fill="#bdbdbd"/><rect x="-5.8" y="-6.9" width="11.6" height="11.6" rx="0.8" fill="#bdbdbd"/></g><g fill="#c8c8c8"><rect x="271" y="16" width="16" height="2.2"/><rect x="271" y="21" width="16" height="2.2"/><rect x="271" y="26" width="16" height="2.2"/></g><g transform="translate(246.6,23.5) rotate(45) scale(0.94)" fill="#bdbdbd"><path d="M-3.2 -8.5 h6.4 v5.2 l2.6 2.8 h-11.6 l2.6 -2.8z"/><path d="M-0.8 -0.5 h1.6 l-0.8 8z"/></g><g transform="translate(216.4,22.9) rotate(45) scale(0.95)" fill="#5e5e5e"><rect x="-2.6" y="-8.5" width="5.2" height="2.6" rx="1.2"/><rect x="-2.6" y="-5.2" width="5.2" height="8.5"/><path d="M-2.6 4 h5.2 l-2.6 4z"/></g></svg><div style="position:absolute;left:77px;top:45px;color:#d4d4d4;font-weight:bold;font-size:13.3px;letter-spacing:0.33px;line-height:16px;white-space:nowrap">define_control</div><div style="position:absolute;left:77px;top:72px;color:#cccccc;font-weight:bold;font-size:12px;letter-spacing:-0.2px;line-height:14px;white-space:nowrap">Type: define_control</div><div style="position:absolute;left:5px;top:96px;width:299px;height:1px;background:#555"></div><div class="pl" style="left:21px;top:111px">Name</div><div class="fld dim" style="left:128.5px;top:107px;width:168.4px;height:20px">build_string.joined</div><div class="pl" style="left:21px;top:143px">Name Prefix</div><div class="fld dim" style="left:128.5px;top:139px;width:168.4px;height:20px">for_each.name</div><div class="pl" style="left:21px;top:175px">Name Suffix</div><div class="fld " style="left:128.5px;top:171px;width:168.4px;height:20px">_ctl</div><div class="pl" style="left:21px;top:207px">Tags</div><div class="fld " style="left:128.5px;top:203px;width:168.4px;height:20px">point</div><div class="pl" style="left:21px;top:239px">Pivot Matrix</div><div class="fld dim" style="left:128.5px;top:235px;width:168.4px;height:20px">for_each.pivot_matrices</div><div class="hdr" style="top:265px">Transform Settings<i></i></div><div class="pl" style="left:37px;top:299px">Rotation Order</div><div class="dd" style="top:294px;letter-spacing:-1.3px">XYZ<b></b></div><div class="pl" style="left:37px;top:331px">Lock Translation</div><div class="cb" style="left:128px;top:330px"></div><div class="cb" style="left:185px;top:330px"></div><div class="cb" style="left:242px;top:330px"></div><div class="pl" style="left:37px;top:363px">Lock Rotation</div><div class="cb" style="left:128px;top:362px"></div><div class="cb" style="left:185px;top:362px"></div><div class="cb" style="left:242px;top:362px"></div><div class="pl" style="left:37px;top:395px">Lock Scale</div><div class="cb" style="left:128px;top:394px"></div><div class="cb" style="left:185px;top:394px"></div><div class="cb" style="left:242px;top:394px"></div><div class="pl" style="left:37px;top:427px">Lock Shear</div><div class="cb" style="left:128px;top:426px"></div><div class="cb" style="left:185px;top:426px"></div><div class="cb" style="left:242px;top:426px"></div><div class="hdr" style="top:453px">Control Shape<i></i></div><div class="pl" style="left:37px;top:487px">Shape</div><div class="dd" style="top:482px">Cube<b></b></div><div class="pl" style="left:37px;top:519px">Color</div><div style="position:absolute;left:128px;top:516px;width:18px;height:18px;background:#e3ae2b"></div><div class="ar" style="left:157px;top:523px"></div><div style="position:absolute;left:182.2px;top:514px;width:36.8px;height:21px;background:#2b2b2b;border:1px solid #2b2b2b"><div style="position:absolute;left:0;top:0;height:19px;width:34.8px;background:#555"></div><div style="position:absolute;left:5.3px;top:0;color:#e2e2e2;font-size:11.3px;line-height:20.5px">1</div></div><div style="position:absolute;left:221.2px;top:514px;width:37.2px;height:21px;background:#2b2b2b;border:1px solid #2b2b2b"><div style="position:absolute;left:0;top:0;height:19px;width:22px;background:#555"></div><div style="position:absolute;left:5.3px;top:0;color:#e2e2e2;font-size:11.3px;line-height:20.5px">0.6</div></div><div style="position:absolute;left:260.1px;top:514px;width:37.3px;height:21px;background:#2b2b2b;border:1px solid #2b2b2b"><div style="position:absolute;left:0;top:0;height:19px;width:3.9px;background:#555"></div><div style="position:absolute;left:5.3px;top:0;color:#e2e2e2;font-size:11.3px;line-height:20.5px">0.1</div></div><div class="pl" style="left:37px;top:551px">Translation</div><div class="ar" style="left:129px;top:555px"></div><div class="nf" style="left:154px;top:546px;width:46px">0</div><div class="nf" style="left:202px;top:546px;width:47px">0</div><div class="nf" style="left:251.3px;top:546px;width:46.2px">0</div><div class="pl" style="left:37px;top:583px">Rotation</div><div class="ar" style="left:129px;top:587px"></div><div class="nf" style="left:154px;top:578px;width:46px">0</div><div class="nf" style="left:202px;top:578px;width:47px">0</div><div class="nf" style="left:251.3px;top:578px;width:46.2px">0</div><div class="pl" style="left:37px;top:615px">Scale</div><div class="ar" style="left:129px;top:619px"></div><div class="nf" style="left:154px;top:610px;width:46px">3</div><div class="nf" style="left:202px;top:610px;width:47px">3</div><div class="nf" style="left:251.3px;top:610px;width:46.2px">3</div><div class="pl" style="left:37px;top:647px">Matrix</div><div class="ar" style="left:129px;top:651px"></div><div class="nf" style="left:154px;top:641.3px;width:35.1px;height:20.6px;line-height:22.6px">1</div><div class="nf" style="left:191.3px;top:641.3px;width:34px;height:20.6px;line-height:22.6px">0</div><div class="nf" style="left:227.4px;top:641.3px;width:33.8px;height:20.6px;line-height:22.6px">0</div><div class="nf" style="left:263.2px;top:641.3px;width:34.2px;height:20.6px;line-height:22.6px">0</div><div class="nf" style="left:154px;top:664.3px;width:35.1px;height:20.6px;line-height:22.6px">0</div><div class="nf" style="left:191.3px;top:664.3px;width:34px;height:20.6px;line-height:22.6px">1</div><div class="nf" style="left:227.4px;top:664.3px;width:33.8px;height:20.6px;line-height:22.6px">0</div><div class="nf" style="left:263.2px;top:664.3px;width:34.2px;height:20.6px;line-height:22.6px">0</div><div class="nf" style="left:154px;top:687.3px;width:35.1px;height:20.6px;line-height:22.6px">0</div><div class="nf" style="left:191.3px;top:687.3px;width:34px;height:20.6px;line-height:22.6px">0</div><div class="nf" style="left:227.4px;top:687.3px;width:33.8px;height:20.6px;line-height:22.6px">1</div><div class="nf" style="left:263.2px;top:687.3px;width:34.2px;height:20.6px;line-height:22.6px">0</div><div class="nf" style="left:154px;top:710.3px;width:35.1px;height:20.6px;line-height:22.6px">0</div><div class="nf" style="left:191.3px;top:710.3px;width:34px;height:20.6px;line-height:22.6px">0</div><div class="nf" style="left:227.4px;top:710.3px;width:33.8px;height:20.6px;line-height:22.6px">0</div><div class="nf" style="left:263.2px;top:710.3px;width:34.2px;height:20.6px;line-height:22.6px">1</div></div>
<svg width="1484" height="740" style="position:absolute;left:0;top:0;pointer-events:none" id="ov"><defs><filter id="sh" x="-10%" y="-20%" width="120%" height="150%"><feDropShadow dx="1.5" dy="2.5" stdDeviation="2" flood-color="#000" flood-opacity="0.5"/></filter></defs><g filter="url(#sh)"><path d="M1184.6 101.1 C1105.4 112.6 1022 119 981.5 138.6 C954.5 151.65 923.3 178.2 897.6 202" fill="none" stroke="#fbb413" stroke-width="4.2"/><path d="M881.6 217.6 L892.3 196.5 L903 207.7z" fill="#fbb413"/></g></svg>
</body></html>
